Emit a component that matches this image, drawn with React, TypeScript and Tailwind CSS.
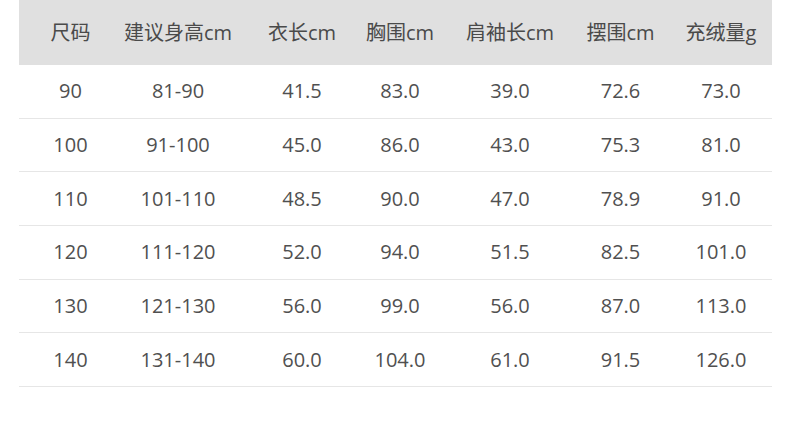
const headers = ["尺码", "建议身高cm", "衣长cm", "胸围cm", "肩袖长cm", "摆围cm", "充绒量g"];

const rows = [
  ["90", "81-90", "41.5", "83.0", "39.0", "72.6", "73.0"],
  ["100", "91-100", "45.0", "86.0", "43.0", "75.3", "81.0"],
  ["110", "101-110", "48.5", "90.0", "47.0", "78.9", "91.0"],
  ["120", "111-120", "52.0", "94.0", "51.5", "82.5", "101.0"],
  ["130", "121-130", "56.0", "99.0", "56.0", "87.0", "113.0"],
  ["140", "131-140", "60.0", "104.0", "61.0", "91.5", "126.0"],
];

const cols = "grid grid-cols-[105px_116px_111px_104px_110px_105px_102px]";
// small nudges so each column's text sits where the original table put it
const cell = [
  "text-center pr-[2px]",
  "text-center pr-[8px]",
  "text-center pl-[13px]",
  "text-center pr-[6px]",
  "text-center",
  "text-center pl-[6px]",
  "text-center",
];

export default function App() {
  return (
    <div className="h-[431px] w-[790px] bg-white font-['Open_Sans','Noto_Sans_CJK_SC',sans-serif] text-[20px] text-[#505050]">
      <div className="ml-[19px] w-[753px]">
        <div className={`${cols} h-[65px] items-center bg-[#e0e0e0] text-[#4a4a4a]`}>
          {headers.map((h, i) => (
            <div key={h} className={`${cell[i]} whitespace-nowrap`}>
              {h}
            </div>
          ))}
        </div>
        {rows.map((row) => (
          <div key={row[0]} className={`${cols} h-[53.7px] items-center border-b border-[#e6e6e6]`}>
            {row.map((v, i) => (
              <div key={i} className={cell[i]}>
                {v}
              </div>
            ))}
          </div>
        ))}
      </div>
    </div>
  );
}
